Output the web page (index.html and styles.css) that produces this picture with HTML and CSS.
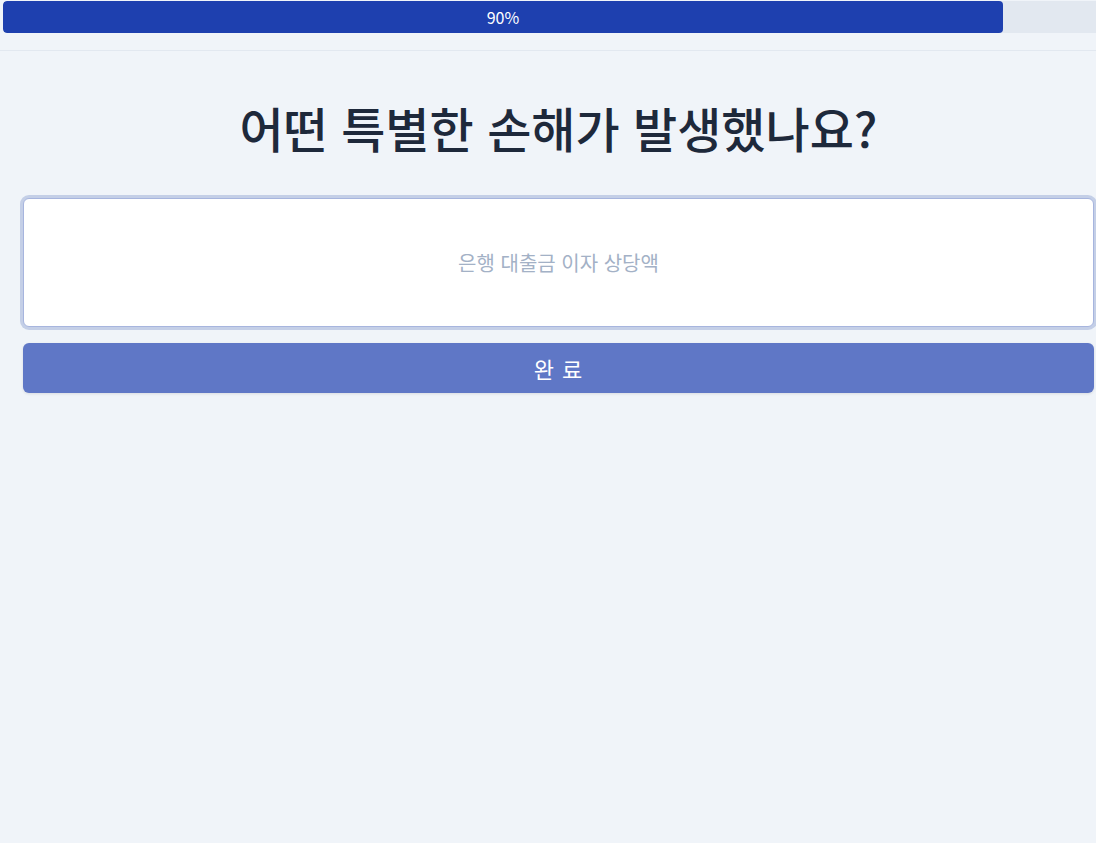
FILE: index.html
```html
<!DOCTYPE html>
<html lang="ko">
<head>
    <meta charset="UTF-8">
    <meta name="viewport" content="width=device-width, initial-scale=1.0">
    <title>손해 입력</title>
    <link rel="stylesheet" href="styles.css">
</head>
<body>

    <div class="page">
        <header class="top">
            <div class="progress">
                <div class="progress-fill" style="width: 90%;">90%</div>
            </div>
        </header>

        <main class="question">
            <h1>어떤 특별한 손해가 발생했나요?</h1>
            <form class="answer-form">
                <input type="text" class="answer" placeholder="은행 대출금 이자 상당액">
                <button type="submit" class="done">완 료</button>
            </form>
        </main>
    </div>

</body>
</html>
```

FILE: styles.css
```css
html {
    overflow: hidden;
}
body {
    margin: 0;
    background: #f0f4f9;
    font-family: "Noto Sans CJK KR", "Noto Sans", sans-serif;
    color: #1e293b;
}
.page {
    width: 1117px;
    min-height: 843px;
}
.top {
    padding: 1px 3px 17px;
    border-bottom: 1px solid #e2e8f0;
}
.progress {
    height: 32px;
    background: #e2e8f0;
    border-radius: 4px;
    overflow: hidden;
}
.progress-fill {
    height: 100%;
    background: #1e40af;
    border-radius: 4px;
    color: #fff;
    font-size: 16px;
    line-height: 32px;
    text-align: center;
}
.question {
    padding: 0 23px;
}
h1 {
    margin: 44px 0 39px;
    text-align: center;
    font-size: 48px;
    font-weight: 500;
    line-height: 64px;
    color: #1e293b;
}
.answer-form {
    display: flex;
    flex-direction: column;
    gap: 16px;
}
.answer {
    box-sizing: border-box;
    width: 100%;
    height: 129px;
    border: 1.5px solid #a7b5de;
    border-radius: 6px;
    box-shadow: 0 0 0 3px #c4cfe7;
    background: #fff;
    text-align: center;
    font-family: inherit;
    font-size: 20px;
    color: #1e293b;
    outline: none;
}
.answer::placeholder {
    color: #a3b1c6;
}
.done {
    height: 50px;
    border: none;
    border-radius: 6px;
    background: #5f77c6;
    color: #fff;
    font-family: inherit;
    font-size: 22px;
    letter-spacing: 1px;
    box-shadow: 0 1px 3px rgba(0,0,0,0.1);
    cursor: pointer;
}
```
